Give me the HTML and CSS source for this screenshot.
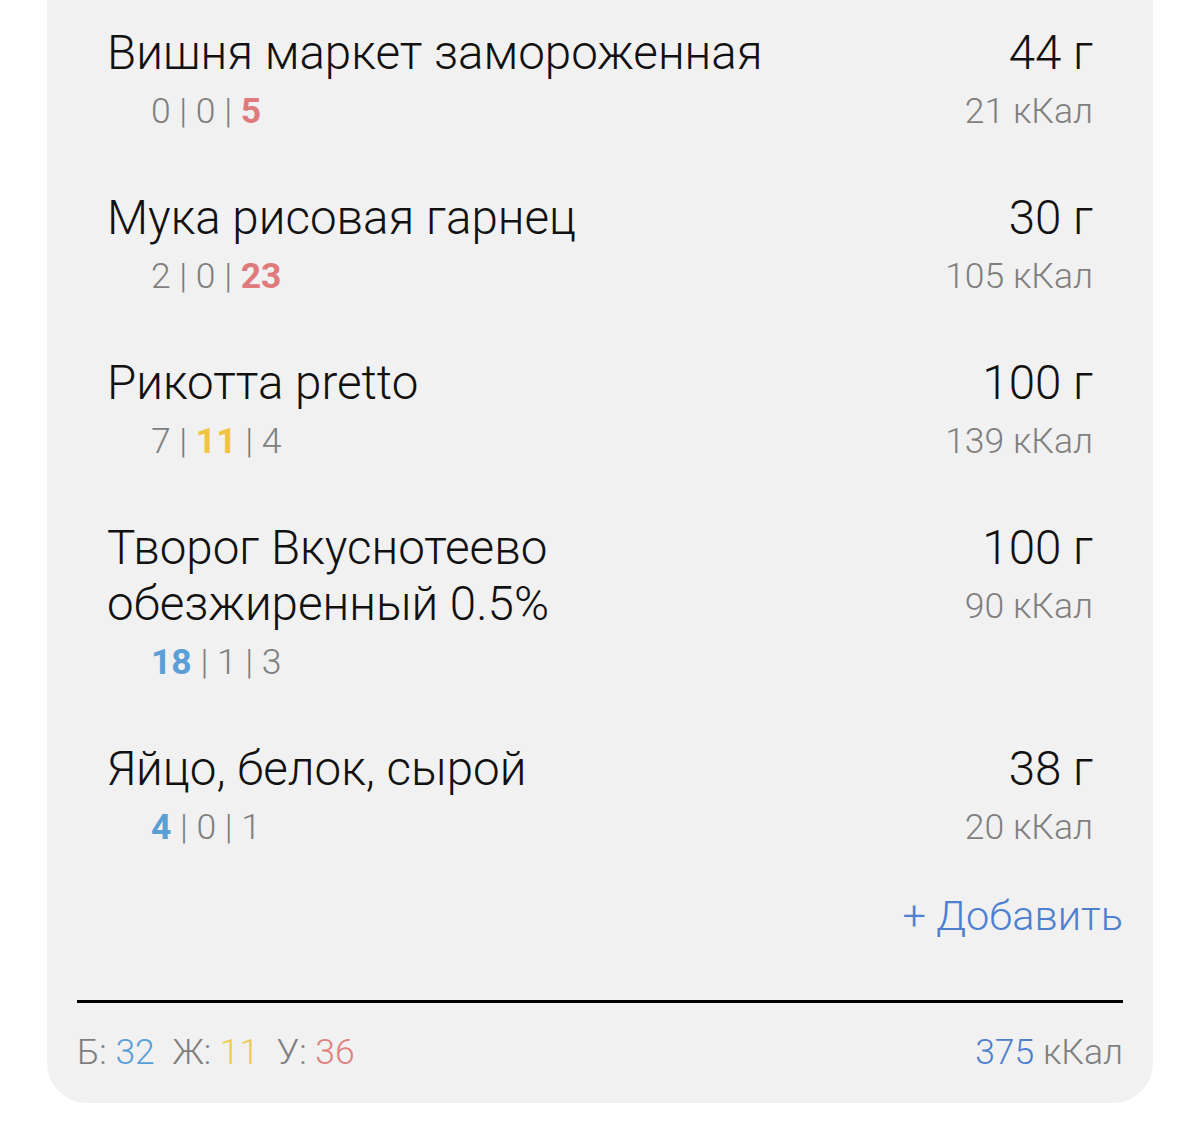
FILE: index.html
```html
<!DOCTYPE html>
<html lang="ru">
<head>
<meta charset="utf-8">
<title>Приём пищи</title>
<link rel="stylesheet" href="styles.css">
</head>
<body>
<div class="card">
  <div class="list">
    <div class="row">
      <div class="info">
        <div class="name">Вишня маркет замороженная</div>
        <div class="macros">0 | 0 | <b class="c">5</b></div>
      </div>
      <div class="amount">
        <div class="weight">44 г</div>
        <div class="kcal">21 кКал</div>
      </div>
    </div>
    <div class="row">
      <div class="info">
        <div class="name">Мука рисовая гарнец</div>
        <div class="macros">2 | 0 | <b class="c">23</b></div>
      </div>
      <div class="amount">
        <div class="weight">30 г</div>
        <div class="kcal">105 кКал</div>
      </div>
    </div>
    <div class="row">
      <div class="info">
        <div class="name">Рикотта pretto</div>
        <div class="macros">7 | <b class="f">11</b> | 4</div>
      </div>
      <div class="amount">
        <div class="weight">100 г</div>
        <div class="kcal">139 кКал</div>
      </div>
    </div>
    <div class="row">
      <div class="info">
        <div class="name">Творог Вкуснотеево обезжиренный 0.5%</div>
        <div class="macros"><b class="p">18</b> | 1 | 3</div>
      </div>
      <div class="amount">
        <div class="weight">100 г</div>
        <div class="kcal">90 кКал</div>
      </div>
    </div>
    <div class="row">
      <div class="info">
        <div class="name">Яйцо, белок, сырой</div>
        <div class="macros"><b class="p">4</b> | 0 | 1</div>
      </div>
      <div class="amount">
        <div class="weight">38 г</div>
        <div class="kcal">20 кКал</div>
      </div>
    </div>
  </div>
  <div class="add">+ Добавить</div>
  <div class="divider"></div>
  <div class="totals">
    <div class="macro-totals">
      <span class="group">Б: <span class="tp">32</span></span>
      <span class="group">Ж: <span class="tf">11</span></span>
      <span class="group">У: <span class="tc">36</span></span>
    </div>
    <div class="total-kcal"><span class="tk">375</span> кКал</div>
  </div>
</div>
</body>
</html>
```
FILE: styles.css
```css
html, body {
  margin: 0;
  padding: 0;
  background: #ffffff;
}

body {
  font-family: Roboto, "Noto Sans", "Liberation Sans", sans-serif;
  font-weight: 300;
}

.card {
  margin: 0 47px;
  background: #f1f1f1;
  border-radius: 0 0 40px 40px;
  padding: 0 30px 31px;
}

.row {
  display: flex;
  justify-content: space-between;
  align-items: flex-start;
  padding: 25px 30px 24px;
}

.info {
  max-width: 720px;
}

.name {
  font-size: 47.5px;
  line-height: 56px;
  color: #111111;
}

.macros {
  font-size: 35.5px;
  line-height: 60px;
  color: #7f7f7f;
  margin-left: 44px;
}

.macros b {
  font-weight: 700;
}

.c { color: #e07a7c; }
.f { color: #f0c43e; }
.p { color: #5a9fd6; }

.amount {
  text-align: right;
  white-space: nowrap;
}

.weight {
  font-size: 47.5px;
  line-height: 56px;
  color: #111111;
}

.kcal {
  font-size: 35.5px;
  line-height: 60px;
  color: #7f7f7f;
}

.add {
  margin-top: 11px;
  text-align: right;
  font-size: 41.5px;
  line-height: 48px;
  color: #4f80d0;
}

.divider {
  margin-top: 60px;
  height: 3px;
  background: #000000;
}

.totals {
  margin-top: 29px;
  display: flex;
  justify-content: space-between;
  font-size: 35.5px;
  line-height: 40px;
  color: #7f7f7f;
}

.group {
  margin-right: 9px;
}

.tp { color: #5a9fd6; }
.tf { color: #f0c850; }
.tc { color: #e08080; }
.tk { color: #4f80d0; }
```
